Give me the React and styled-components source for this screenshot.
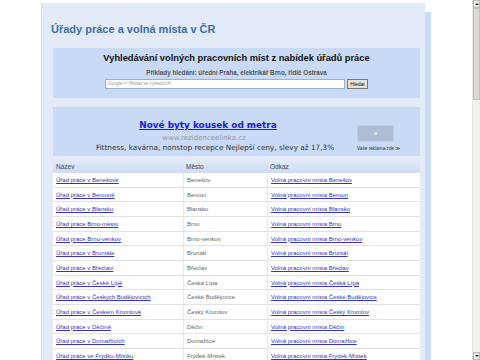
import React from "react";
import styled, { createGlobalStyle } from "styled-components";

const GlobalStyle = createGlobalStyle`
  html, body {
    margin: 0;
    padding: 0;
    background: #ffffff;
    overflow: hidden;
  }
`;

const Page = styled.div`
  display: flex;
  width: 480px;
  height: 360px;
  overflow: hidden;
  font-family: "Liberation Sans", Arial, sans-serif;
`;

const Viewport = styled.div`
  flex: 1;
  display: flex;
  justify-content: center;
  padding-top: 3px;
`;

const Wrapper = styled.div`
  width: 384px;
  height: 400px;
  margin-right: 6px;
  background: #e3ebf9;
  border-left: 1px solid #cfdcf1;
  box-shadow: 6px 9px 0 #cadcf6;
  padding: 19px 5px 0 11px;
  box-sizing: border-box;
`;

const Title = styled.h1`
  margin: 0 0 12px -2px;
  font-size: 11px;
  font-weight: bold;
  color: #3a6ea6;
  line-height: 14px;
`;

const BlueBox = styled.div`
  background: #c8daf5;
  margin-bottom: ${(p) => p.$gap || 0}px;
`;

const SearchBox = styled(BlueBox)`
  height: 50px;
  padding-top: 4px;
  box-sizing: border-box;
  display: flex;
  flex-direction: column;
  align-items: center;
`;

const SearchHeading = styled.div`
  font-size: 9.3px;
  font-weight: bold;
  color: #111;
  line-height: 12px;
`;

const Examples = styled.div`
  margin-top: 5px;
  font-size: 6.3px;
  font-weight: bold;
  color: #555;
  line-height: 8px;
`;

const SearchForm = styled.div`
  display: flex;
  align-items: center;
  gap: 2px;
  margin-top: 2px;
`;

const SearchInput = styled.div`
  width: 240px;
  height: 10px;
  background: #fff;
  border: 1px solid #9eb0c8;
  box-sizing: border-box;
  font-size: 4.6px;
  line-height: 8px;
  color: #999;
  padding-left: 2px;
`;

const SearchButton = styled.div`
  width: 21px;
  height: 10px;
  background: #e6e2d8;
  border: 1px solid #777;
  box-sizing: border-box;
  font-size: 5px;
  line-height: 8px;
  text-align: center;
  color: #111;
`;

const AdBox = styled(BlueBox)`
  height: 49px;
  display: flex;
  align-items: stretch;
`;

const AdMain = styled.div`
  flex: 1;
  display: flex;
  flex-direction: column;
  align-items: center;
  padding: 12px 0 0 20px;
  font-family: "DejaVu Sans", Verdana, sans-serif;
`;

const AdTitle = styled.a`
  font-size: 8.9px;
  font-weight: bold;
  color: #1a1adc;
  text-decoration: underline;
  line-height: 12px;
  margin-left: -14px;
`;

const AdUrl = styled.div`
  margin-top: 2px;
  font-size: 7px;
  color: #999;
  line-height: 10px;
  margin-left: -22px;
`;

const AdText = styled.div`
  font-size: 7.3px;
  color: #333;
  line-height: 10px;
`;

const AdSide = styled.div`
  width: 63px;
  display: flex;
  flex-direction: column;
  align-items: flex-start;
  padding-top: 18px;
`;

const AdButton = styled.div`
  width: 37px;
  height: 17px;
  background: #aebdd3;
  border: 1px solid #c2cde0;
  box-sizing: border-box;
  color: #fff;
  font-size: 7px;
  line-height: 15px;
  text-align: center;
`;

const AdLabel = styled.div`
  margin-top: 4px;
  font-size: 4.7px;
  color: #333;
  white-space: nowrap;
`;

const Table = styled.div`
  display: grid;
  grid-template-columns: 130px 84px 1fr;
`;

const HeadCell = styled.div`
  background: linear-gradient(#dfe9f9, #cddcf4);
  font-size: 6.5px;
  color: #445;
  height: 12px;
  line-height: 12px;
  padding-left: 3px;
`;

const Cell = styled.div`
  background: #fff;
  height: 14.67px;
  line-height: 14px;
  box-sizing: border-box;
  border-bottom: 1px solid #e2e2e2;
  border-left: ${(p) => (p.$first ? "none" : "1px solid #e8e8e8")};
  padding-left: 3px;
  font-size: 6px;
  color: #666;
  white-space: nowrap;
  overflow: hidden;
`;

const Link = styled.a`
  color: #3434b8;
  text-decoration: underline;
`;

const Scrollbar = styled.div`
  width: 8px;
  display: flex;
  flex-direction: column;
  background: #f1f0ec;
  border-left: 1px solid #e4e4e4;
  box-sizing: border-box;
`;

const ScrollArrow = styled.div`
  height: 8px;
  background: #ece9e1;
  border: 1px solid #b8b8b8;
  box-sizing: border-box;
  display: flex;
  align-items: center;
  justify-content: center;
  &::after {
    content: "";
    border-left: 2px solid transparent;
    border-right: 2px solid transparent;
    ${(p) => (p.$down ? "border-top: 2px solid #333;" : "border-bottom: 2px solid #333;")}
  }
`;

const ScrollThumb = styled.div`
  height: 92px;
  background: #dcdad2;
  border: 1px solid #c4c2ba;
  box-sizing: border-box;
`;

const ScrollTrack = styled.div`
  flex: 1;
`;

const offices = [
  ["Úřad práce v Benešově", "Benešov", "Volná pracovní místa Benešov"],
  ["Úřad práce v Berouně", "Beroun", "Volná pracovní místa Beroun"],
  ["Úřad práce v Blansku", "Blansko", "Volná pracovní místa Blansko"],
  ["Úřad práce Brno-město", "Brno", "Volná pracovní místa Brno"],
  ["Úřad práce Brno-venkov", "Brno-venkov", "Volná pracovní místa Brno-venkov"],
  ["Úřad práce v Bruntále", "Bruntál", "Volná pracovní místa Bruntál"],
  ["Úřad práce v Břeclavi", "Břeclav", "Volná pracovní místa Břeclav"],
  ["Úřad práce v České Lípě", "Česká Lípa", "Volná pracovní místa Česká Lípa"],
  ["Úřad práce v Českých Budějovicích", "České Budějovice", "Volná pracovní místa České Budějovice"],
  ["Úřad práce v Českém Krumlově", "Český Krumlov", "Volná pracovní místa Český Krumlov"],
  ["Úřad práce v Děčíně", "Děčín", "Volná pracovní místa Děčín"],
  ["Úřad práce v Domažlicích", "Domažlice", "Volná pracovní místa Domažlice"],
  ["Úřad práce ve Frýdku-Místku", "Frýdek-Místek", "Volná pracovní místa Frýdek-Místek"],
];

export default function App() {
  return (
    <Page>
      <GlobalStyle />
      <Viewport>
        <Wrapper>
          <Title>Úřady práce a volná místa v ČR</Title>
          <SearchBox $gap={9}>
            <SearchHeading>Vyhledávání volných pracovních míst z nabídek úřadů práce</SearchHeading>
            <Examples>Příklady hledání: úřední Praha, elektrikář Brno, řidič Ostrava</Examples>
            <SearchForm>
              <SearchInput>Google™ Hledat ve výsledcích</SearchInput>
              <SearchButton>Hledat</SearchButton>
            </SearchForm>
          </SearchBox>
          <AdBox $gap={5}>
            <AdMain>
              <AdTitle>Nové byty kousek od metra</AdTitle>
              <AdUrl>www.rezidenceelinka.cz</AdUrl>
              <AdText>Fittness, kavárna, nonstop recepce Nejlepší ceny, slevy až 17,3%</AdText>
            </AdMain>
            <AdSide>
              <AdButton>»</AdButton>
              <AdLabel>Vaše reklama zde ≫</AdLabel>
            </AdSide>
          </AdBox>
          <Table>
            <HeadCell>Název</HeadCell>
            <HeadCell>Město</HeadCell>
            <HeadCell>Odkaz</HeadCell>
            {offices.map(([name, city, link]) => (
              <React.Fragment key={name}>
                <Cell $first>
                  <Link>{name}</Link>
                </Cell>
                <Cell>{city}</Cell>
                <Cell>
                  <Link>{link}</Link>
                </Cell>
              </React.Fragment>
            ))}
          </Table>
        </Wrapper>
      </Viewport>
      <Scrollbar>
        <ScrollArrow />
        <ScrollThumb />
        <ScrollTrack />
        <ScrollArrow $down />
      </Scrollbar>
    </Page>
  );
}
